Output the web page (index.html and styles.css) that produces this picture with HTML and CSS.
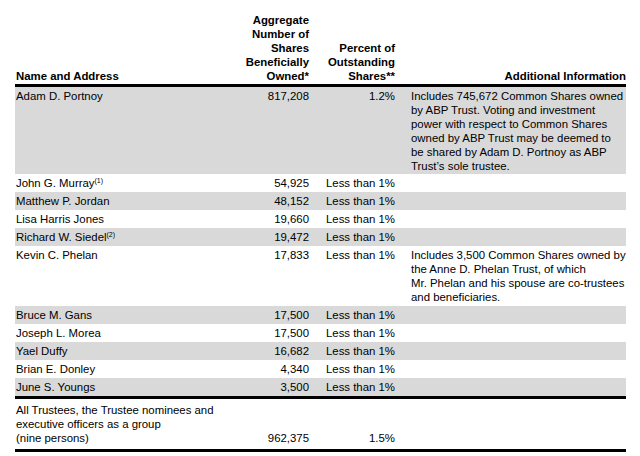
FILE: index.html
```html
<!DOCTYPE html>
<html>
<head>
<meta charset="utf-8">
<link rel="stylesheet" href="styles.css">
</head>
<body>
<div class="page">
<table class="own">
  <colgroup>
    <col class="c-name"><col class="c-shares"><col class="c-pct"><col class="c-info">
  </colgroup>
  <thead>
    <tr>
      <th class="name">Name and Address</th>
      <th class="num">Aggregate Number of Shares Beneficially Owned*</th>
      <th class="num">Percent of Outstanding Shares**</th>
      <th class="info hinfo">Additional Information</th>
    </tr>
  </thead>
  <tbody>
    <tr class="shade first">
      <td class="name">Adam D. Portnoy</td>
      <td class="num">817,208</td>
      <td class="num">1.2%</td>
      <td class="info">Includes 745,672 Common Shares owned by ABP Trust. Voting and investment power with respect to Common Shares owned by ABP Trust may be deemed to be shared by Adam D. Portnoy as ABP Trust’s sole trustee.</td>
    </tr>
    <tr>
      <td class="name">John G. Murray<sup>(1)</sup></td>
      <td class="num">54,925</td>
      <td class="num">Less than 1%</td>
      <td class="info"></td>
    </tr>
    <tr class="shade">
      <td class="name">Matthew P. Jordan</td>
      <td class="num">48,152</td>
      <td class="num">Less than 1%</td>
      <td class="info"></td>
    </tr>
    <tr>
      <td class="name">Lisa Harris Jones</td>
      <td class="num">19,660</td>
      <td class="num">Less than 1%</td>
      <td class="info"></td>
    </tr>
    <tr class="shade">
      <td class="name">Richard W. Siedel<sup>(2)</sup></td>
      <td class="num">19,472</td>
      <td class="num">Less than 1%</td>
      <td class="info"></td>
    </tr>
    <tr>
      <td class="name">Kevin C. Phelan</td>
      <td class="num">17,833</td>
      <td class="num">Less than 1%</td>
      <td class="info">Includes 3,500 Common Shares owned by the Anne D. Phelan Trust, of which Mr.&nbsp;Phelan and his spouse are co-trustees and beneficiaries.</td>
    </tr>
    <tr class="shade">
      <td class="name">Bruce M. Gans</td>
      <td class="num">17,500</td>
      <td class="num">Less than 1%</td>
      <td class="info"></td>
    </tr>
    <tr>
      <td class="name">Joseph L. Morea</td>
      <td class="num">17,500</td>
      <td class="num">Less than 1%</td>
      <td class="info"></td>
    </tr>
    <tr class="shade">
      <td class="name">Yael Duffy</td>
      <td class="num">16,682</td>
      <td class="num">Less than 1%</td>
      <td class="info"></td>
    </tr>
    <tr>
      <td class="name">Brian E. Donley</td>
      <td class="num">4,340</td>
      <td class="num">Less than 1%</td>
      <td class="info"></td>
    </tr>
    <tr class="shade last">
      <td class="name">June S. Youngs</td>
      <td class="num">3,500</td>
      <td class="num">Less than 1%</td>
      <td class="info"></td>
    </tr>
  </tbody>
  <tfoot>
    <tr class="total">
      <td class="name">All Trustees, the Trustee nominees and executive officers as a group<br>(nine persons)</td>
      <td class="num">962,375</td>
      <td class="num">1.5%</td>
      <td class="info"></td>
    </tr>
  </tfoot>
</table>
</div>
</body>
</html>
```

FILE: styles.css
```css
html, body {
  margin: 0;
  padding: 0;
  background: #ffffff;
}

.page {
  padding: 13px 14px 0 15px;
}

.own {
  width: 611px;
  table-layout: fixed;
  border-collapse: collapse;
  font-family: "Liberation Sans", Arial, sans-serif;
  font-size: 11.4px;
  line-height: 14px;
  color: #000;
}

.c-name { width: 226px; }
.c-shares { width: 68px; }
.c-pct { width: 86px; }
.c-info { width: 231px; }

.own th,
.own td {
  padding: 2px 0;
  vertical-align: top;
}

.own th {
  font-weight: bold;
  vertical-align: bottom;
  padding: 0 0 1px 0;
  border-bottom: 3px solid #000;
}

.own .name {
  text-align: left;
  padding-left: 1px;
}

.own .num {
  text-align: right;
}

.own .info {
  text-align: left;
  padding-left: 16px;
}

.own th.hinfo {
  text-align: right;
}

.shade td {
  background: #d9d9d9;
}

.first td {
  padding-bottom: 1px;
}

.last td {
  border-bottom: 3px solid #000;
}

.total td {
  padding-top: 4px;
  padding-bottom: 4px;
  vertical-align: bottom;
  border-bottom: 3px solid #000;
}

.total td.name {
  vertical-align: top;
}

sup {
  font-size: 7px;
  line-height: 0;
  vertical-align: 4px;
}
```
